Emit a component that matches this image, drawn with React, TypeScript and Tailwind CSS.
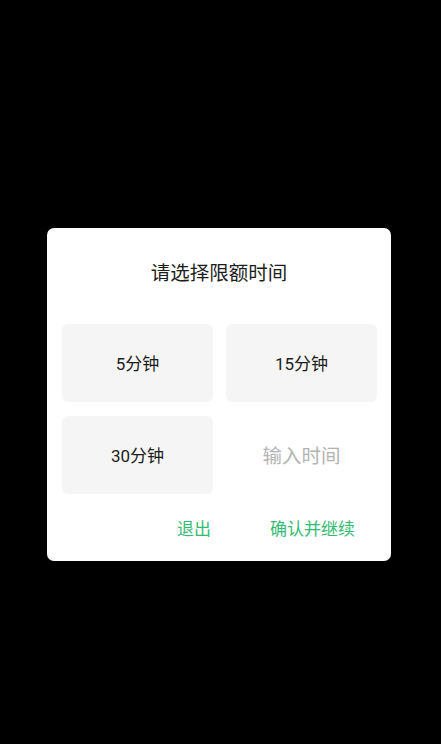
import React from "react";

export default function App() {
  const font = { fontFamily: 'Roboto, "Noto Sans CJK SC", "Noto Sans", sans-serif' };
  return (
    <div className="w-[441px] h-[744px] bg-black overflow-hidden" style={font}>
      <div className="ml-[47px] pt-[228px]">
        <div className="w-[344px] h-[333px] bg-white rounded-[7px] flex flex-col">
          <div className="pt-[33px] h-[58px] leading-[26px] text-center text-[19.5px] text-[#1c1c1c]">
            请选择限额时间
          </div>
          <div className="mt-[38px] pl-[15px] pr-[14px] grid grid-cols-[151px_151px] gap-x-[13px] gap-y-[14px]">
            <div className="h-[78px] pt-[4px] rounded-[6px] bg-[#f5f5f5] flex items-center justify-center text-[17px] text-[#1c1c1c]">
              5分钟
            </div>
            <div className="h-[78px] pt-[4px] rounded-[6px] bg-[#f5f5f5] flex items-center justify-center text-[17px] text-[#1c1c1c]">
              15分钟
            </div>
            <div className="h-[78px] pt-[4px] rounded-[6px] bg-[#f5f5f5] flex items-center justify-center text-[17px] text-[#1c1c1c]">
              30分钟
            </div>
            <div className="h-[78px] pt-[3px] flex items-center justify-center text-[19.5px] text-[#b3b3b3]">
              输入时间
            </div>
          </div>
          <div className="mt-[23px] h-[24px] leading-[24px] flex justify-end pr-[36px] gap-[59px] text-[17px] text-[#36bb74]">
            <span>退出</span>
            <span>确认并继续</span>
          </div>
        </div>
      </div>
    </div>
  );
}
